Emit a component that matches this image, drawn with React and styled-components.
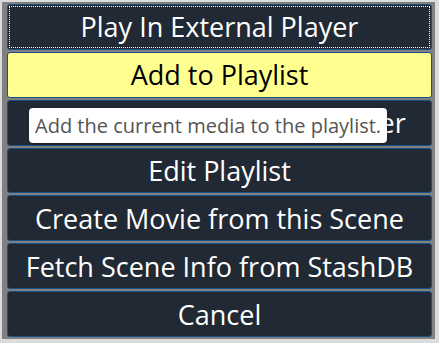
import React from 'react';
import styled, { createGlobalStyle } from 'styled-components';

const Global = createGlobalStyle`
    html, body {
        margin: 0;
        padding: 0;
        background: #dcdcdc;
    }
`;

const Frame = styled.div`
    width: 439px;
    height: 343px;
    box-sizing: border-box;
    padding: 2px 4px 4px 2px;
    background: #dcdcdc;
`;

const Menu = styled.div`
    height: 100%;
    box-sizing: border-box;
    background: #808080;
    padding: 2px 3px 2px 5px;
    display: flex;
    flex-direction: column;
    gap: 2px;
`;

const Item = styled.div`
    position: relative;
    height: 46px;
    box-sizing: border-box;
    border: 1px solid #1c4f82;
    border-radius: 3px;
    background: ${p => (p.$hover ? '#ffff90' : '#212a34')};
    color: ${p => (p.$hover ? '#000' : '#fff')};
    font-family: "Open Sans", "Noto Sans", sans-serif;
    font-size: 27px;
    display: flex;
    align-items: center;
    justify-content: center;
    white-space: nowrap;
    overflow: visible;
    outline: ${p => (p.$focus ? '1px dotted #fff' : 'none')};
    outline-offset: -3px;
`;

const Tip = styled.div`
    position: absolute;
    left: 21px;
    top: 7px;
    padding: 3px 6px;
    background: #fff;
    color: #555;
    border-radius: 4px;
    box-shadow: 1px 1px 3px rgba(0, 0, 0, 0.35);
    font-family: "Open Sans", "Noto Sans", sans-serif;
    font-size: 20px;
    line-height: 29px;
`;

export default function App() {
    return (
        <>
            <Global />
            <Frame>
                <Menu>
                    <Item $focus>Play In External Player</Item>
                    <Item $hover>Add to Playlist</Item>
                    <Item>
                        Play Playlist In External Player
                        <Tip>Add the current media to the playlist.</Tip>
                    </Item>
                    <Item>Edit Playlist</Item>
                    <Item>Create Movie from this Scene</Item>
                    <Item>Fetch Scene Info from StashDB</Item>
                    <Item>Cancel</Item>
                </Menu>
            </Frame>
        </>
    );
}
